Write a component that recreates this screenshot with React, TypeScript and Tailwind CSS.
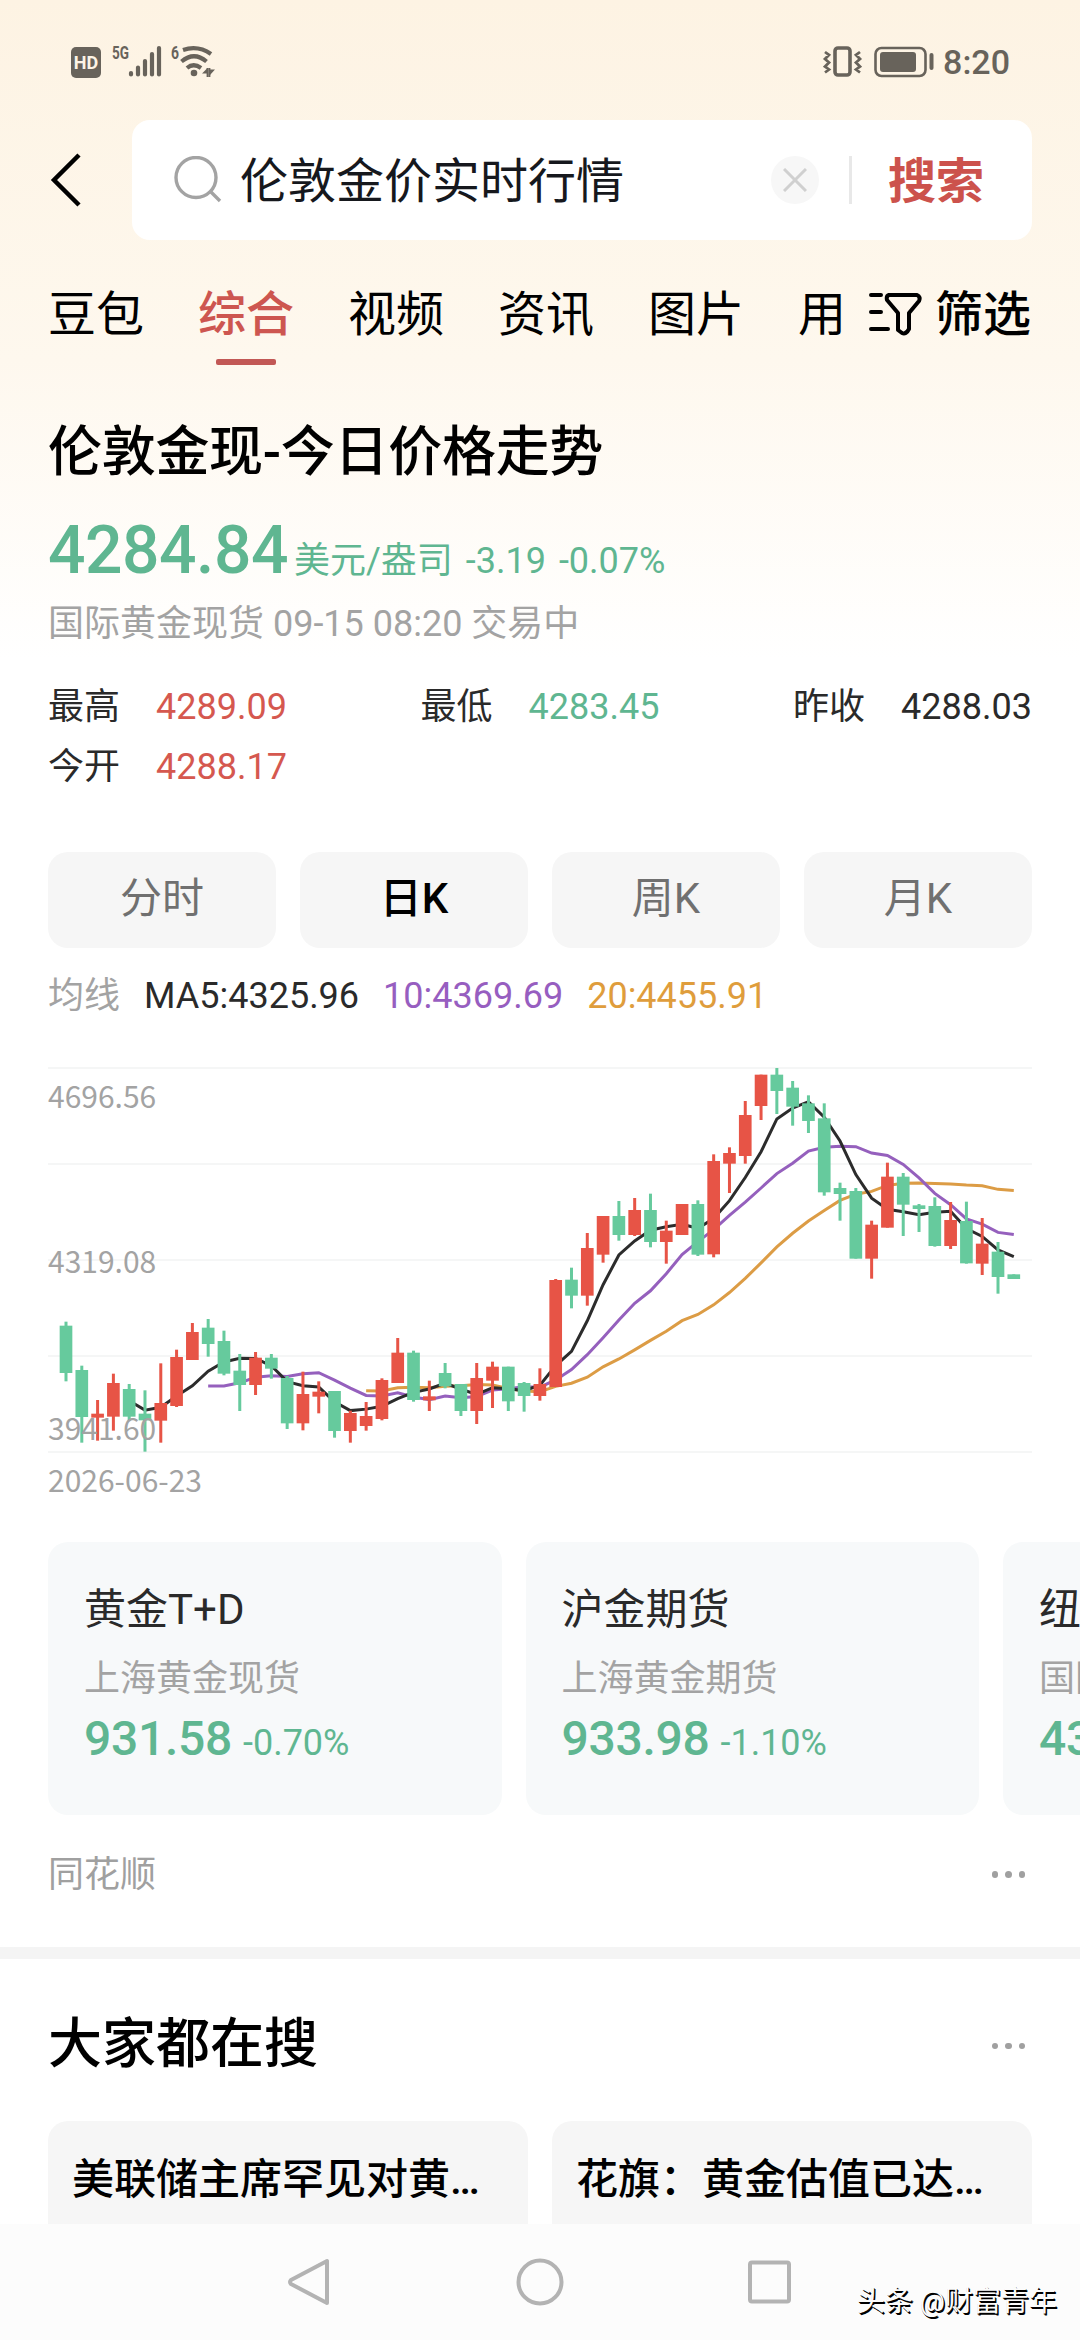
import type { ReactNode } from "react";

type Candle = [rise: 0 | 1, high: number, top: number, bottom: number, low: number];

// Daily candles in chart units (3 per px, y grows downwards).
const CANDLES: Candle[] = [
  [0, 845, 857, 999, 1024],
  [0, 977, 990, 1131, 1208],
  [1, 1080, 1121, 1133, 1202],
  [1, 1001, 1029, 1130, 1172],
  [0, 1032, 1047, 1130, 1142],
  [0, 1051, 1121, 1141, 1235],
  [1, 970, 1089, 1142, 1208],
  [1, 929, 951, 1098, 1101],
  [1, 849, 876, 960, 960],
  [0, 837, 863, 912, 950],
  [0, 872, 903, 1001, 1006],
  [0, 942, 992, 1035, 1113],
  [1, 936, 953, 1035, 1065],
  [0, 942, 953, 986, 1016],
  [0, 1008, 1014, 1150, 1167],
  [1, 995, 1062, 1150, 1171],
  [1, 1024, 1055, 1070, 1120],
  [0, 1053, 1053, 1173, 1193],
  [1, 1112, 1119, 1173, 1208],
  [1, 1086, 1128, 1158, 1172],
  [1, 1015, 1020, 1137, 1141],
  [1, 894, 938, 1029, 1029],
  [0, 932, 938, 1080, 1085],
  [1, 1022, 1069, 1081, 1113],
  [0, 969, 999, 1039, 1045],
  [0, 1032, 1032, 1113, 1128],
  [1, 969, 1014, 1113, 1152],
  [1, 965, 980, 1022, 1104],
  [0, 980, 980, 1084, 1113],
  [0, 1026, 1029, 1068, 1115],
  [1, 985, 1032, 1068, 1082],
  [1, 717, 720, 1041, 1041],
  [0, 683, 719, 767, 805],
  [1, 579, 624, 767, 797],
  [1, 528, 528, 644, 668],
  [0, 483, 528, 585, 602],
  [1, 474, 510, 585, 588],
  [0, 461, 510, 606, 622],
  [1, 542, 572, 606, 671],
  [1, 492, 492, 585, 585],
  [0, 481, 492, 644, 648],
  [1, 343, 363, 643, 652],
  [1, 322, 339, 371, 459],
  [1, 183, 225, 348, 371],
  [1, 104, 104, 198, 240],
  [0, 84, 104, 153, 222],
  [0, 123, 143, 200, 257],
  [0, 166, 190, 243, 279],
  [0, 190, 235, 457, 467],
  [0, 428, 444, 462, 542],
  [0, 444, 453, 656, 656],
  [1, 542, 554, 656, 716],
  [1, 368, 410, 563, 563],
  [0, 399, 410, 494, 588],
  [0, 492, 496, 507, 576],
  [0, 472, 498, 618, 620],
  [1, 486, 540, 618, 627],
  [0, 485, 543, 670, 671],
  [1, 534, 611, 671, 705],
  [0, 606, 635, 711, 761],
  [0, 703, 703, 717, 717],
];

const GRID = [84, 372, 660, 948, 1236];
const xAt = (i: number) => 54 + i * 47.39;

function movingAverage(days: number) {
  const closes = CANDLES.map(([rise, , top, bottom]) => (rise ? top : bottom));
  const points: string[] = [];
  for (let i = days - 1; i < closes.length; i++) {
    const sum = closes.slice(i - days + 1, i + 1).reduce((a, b) => a + b, 0);
    points.push(`${xAt(i).toFixed(1)},${(sum / days).toFixed(1)}`);
  }
  return points.join(" ");
}

const TABS = ["豆包", "综合", "视频", "资讯", "图片", "用"];
const PERIODS = ["分时", "日K", "周K", "月K"];
const MARKETS = [
  { name: "黄金T+D", source: "上海黄金现货", price: "931.58", change: "-0.70%" },
  { name: "沪金期货", source: "上海黄金期货", price: "933.98", change: "-1.10%" },
  { name: "纽", source: "国际", price: "43", change: "" },
];
const HOT = ["美联储主席罕见对黄…", "花旗：黄金估值已达…"];

export default function App() {
  return (
    <div className="flex h-[2340px] w-[1080px] flex-col overflow-hidden bg-white bg-[linear-gradient(to_bottom,#fdf3e3_0px,#fef8ee_360px,#ffffff_660px)] font-[Roboto,'Noto_Sans_CJK_SC',sans-serif] text-black">
      <StatusBar />
      <SearchBar />
      <TabBar />
      <main className="flex min-h-0 flex-1 flex-col overflow-hidden">
        <Quote />
        <Periods />
        <KLineChart />
        <Markets />
        <div className="flex h-[132px] shrink-0 items-start justify-between px-12 pt-[33px]">
          <span className="text-[36px] leading-[54px] text-[#a0a0a0]">同花顺</span>
          <More className="mt-[23px]" />
        </div>
        <div className="h-3 shrink-0 bg-[#f4f4f4]" />
        <section className="px-12 pt-[46px]">
          <div className="flex h-20 items-center justify-between">
            <h2 className="text-[54px] leading-20 font-medium">大家都在搜</h2>
            <More className="mt-[2px]" />
          </div>
          <div className="mt-9 grid grid-cols-2 gap-6">
            {HOT.map((text) => (
              <div
                key={text}
                className="h-[160px] rounded-[20px] bg-[#f6f6f6] px-6 pt-[29px] text-[42px] leading-[60px] font-medium whitespace-nowrap"
              >
                {text}
              </div>
            ))}
          </div>
        </section>
      </main>
      <NavBar />
    </div>
  );
}

function StatusBar() {
  return (
    <div className="flex h-[120px] shrink-0 items-start justify-between pr-[70px] pl-[71px] text-[#68635b]">
      <div className="mt-[44px] flex">
        <div className="mt-[3px] flex h-[31px] w-[30px] items-center justify-center rounded-[5px] bg-[#68635b] text-[18px] leading-6 font-bold text-[#fdf4e6]">
          HD
        </div>
        <svg className="ml-[10px] h-9 w-[106px] overflow-visible" viewBox="0 0 106 36" fill="none" stroke="currentColor">
          <text x="1" y="15" fontSize="18" fontWeight="700" fill="currentColor" stroke="none" textLength="17" lengthAdjust="spacingAndGlyphs">
            5G
          </text>
          <g strokeWidth="4.2" strokeLinecap="round">
            <path d="M20 29v1.5M27 23.500v7M34 17v13.500M41 10v20.500M48 4v26.500" />
          </g>
          <text x="60" y="15" fontSize="18" fontWeight="700" fill="currentColor" stroke="none" textLength="8" lengthAdjust="spacingAndGlyphs">
            6
          </text>
          <g strokeWidth="4.200">
            <path d="M72 6Q87 1 100 10M70.500 17.500Q83 7 95.500 17.500M76 24Q82.500 18.500 90 24" />
          </g>
          <circle cx="83" cy="29" r="3.300" fill="currentColor" stroke="none" />
          <path d="M96.500 24v9M98.500 24v9" strokeWidth="1.800" />
          <path d="M96 24.500v5h-5zM99 31v-5.500h5z" fill="currentColor" stroke="none" />
        </svg>
      </div>
      <div className="mt-[40px] flex items-center">
        <svg className="h-11 w-[116px]" viewBox="0 0 116 44" fill="none" stroke="currentColor">
          <rect x="14" y="8" width="15" height="27" rx="3" strokeWidth="3.600" />
          <path d="M4 12l4 3-4 4 4 3.500-4 4 4 3-4 3M39 12l-4 3 4 4-4 3.500 4 4-4 3 4 3" strokeWidth="2.800" />
          <rect x="54.500" y="8" width="50" height="28" rx="6" strokeWidth="2.600" />
          <rect x="59" y="12" width="36" height="20" rx="3" fill="currentColor" stroke="none" />
          <path d="M110.500 15v13" strokeWidth="4" strokeLinecap="round" />
        </svg>
        <span className="ml-[6px] text-[34px] leading-11 font-medium">8:20</span>
      </div>
    </div>
  );
}

function SearchBar() {
  return (
    <div className="flex h-[120px] shrink-0 items-center pr-12">
      <svg className="ml-[48px] h-[60px] w-[36px]" viewBox="0 0 36 60" fill="none" stroke="#000" strokeWidth="4.500">
        <path d="M31 5L6 30l25 25" />
      </svg>
      <div className="ml-12 flex h-[120px] flex-1 items-center rounded-[18px] bg-white">
        <svg className="ml-[42px] h-12 w-12" viewBox="0 0 48 48" fill="none" stroke="#a3a3a3" strokeWidth="3.400">
          <circle cx="22" cy="21.500" r="20" />
          <path d="M36 35l10 10" />
        </svg>
        <span className="ml-[18px] flex-1 pt-1 text-[48px] leading-[72px] text-[#16181d]">伦敦金价实时行情</span>
        <span className="flex h-12 w-12 items-center justify-center rounded-full bg-[#f7f7f7]">
          <svg className="h-6 w-6" viewBox="0 0 24 24" stroke="#d0d0d0" strokeWidth="3">
            <path d="M1 1l22 22M23 1L1 23" />
          </svg>
        </span>
        <span className="ml-[30px] h-12 w-[3px] bg-[#e8e8e8]" />
        <span className="mr-12 ml-[36px] pt-1 text-[48px] leading-[72px] font-bold text-[#cc524c]">搜索</span>
      </div>
    </div>
  );
}

function TabBar() {
  return (
    <div className="flex h-[150px] shrink-0 pt-[39px] pl-12 text-[48px] leading-[72px]">
      <div className="flex w-[797px] gap-[54px] whitespace-nowrap">
        {TABS.map((tab) =>
          tab === "综合" ? (
            <div key={tab} className="flex shrink-0 flex-col items-center font-medium text-[#cd5650]">
              {tab}
              <span className="mt-[8px] h-[6px] w-[60px] rounded-[2px] bg-[#c25855]" />
            </div>
          ) : (
            <div key={tab} className="shrink-0">
              {tab}
            </div>
          ),
        )}
      </div>
      <svg className="mt-[13px] ml-[22px] h-[44px] w-[56px] shrink-0" viewBox="0 0 56 44" fill="none" stroke="#000" strokeWidth="4" strokeLinecap="round" strokeLinejoin="round">
        <path d="M4 3h10M4 20h10M4 37h17" />
        <path d="M22 3h28q4 2 2 6L42 21v16q-3 6-7 4l-4-3V21L20 8q-1-4 2-5z" />
      </svg>
      <span className="ml-[12px] font-medium">筛选</span>
    </div>
  );
}

function Quote() {
  return (
    <section className="h-[462px] shrink-0 px-12 pt-[23px]">
      <h1 className="text-[54px] leading-20 font-medium tracking-[-0.3px]">伦敦金现-今日价格走势</h1>
      <div className="mt-4 flex h-[84px] items-baseline text-[#5fb691]">
        <span className="text-[66px] leading-[84px] font-medium tracking-[-0.5px]">4284.84</span>
        <span className="ml-[6px] text-[36px]">美元/盎司</span>
        <span className="ml-[13px] text-[36px]">-3.19</span>
        <span className="ml-[13px] text-[36px]">-0.07%</span>
      </div>
      <p className="mt-1 text-[36px] leading-[54px] text-[#a3a3a3]">国际黄金现货 09-15 08:20 交易中</p>
      <div className="mt-[26px] flex justify-between">
        <Stat label="最高" color="text-[#d5584f]">4289.09</Stat>
        <Stat label="最低" color="text-[#5fb691]">4283.45</Stat>
        <Stat label="昨收" color="text-[#2a2a2a]">4288.03</Stat>
      </div>
      <Stat label="今开" color="text-[#d5584f]">4288.17</Stat>
    </section>
  );
}

function Stat({ label, color, children }: { label: string; color: string; children: ReactNode }) {
  return (
    <div className="flex gap-9 text-[36px] leading-[60px]">
      <span className="text-[#2a2a2a]">{label}</span>
      <span className={color}>{children}</span>
    </div>
  );
}

function Periods() {
  return (
    <section className="shrink-0 px-12">
      <div className="grid grid-cols-4 gap-6">
        {PERIODS.map((p) => (
          <div
            key={p}
            className={`flex h-24 items-center justify-center rounded-[20px] bg-[#f6f6f6] pb-1 text-[42px] ${
              p === "日K" ? "font-medium text-black" : "text-[#707070]"
            }`}
          >
            {p}
          </div>
        ))}
      </div>
      <div className="flex h-[92px] items-center gap-6 pt-[3px] text-[36px]">
        <span className="text-[#a3a3a3]">均线</span>
        <span className="text-[#2a2a2a]">MA5:4325.96</span>
        <span className="text-[#975ec0]">10:4369.69</span>
        <span className="text-[#df9d3c]">20:4455.91</span>
      </div>
    </section>
  );
}

function KLineChart() {
  return (
    <section className="relative mx-12 h-[502px] shrink-0">
      <svg className="h-[420px] w-[984px]" viewBox="0 0 2952 1260" fill="none">
        {GRID.map((y) => (
          <path key={y} d={`M0 ${y}H2952`} stroke="#f5f6f6" strokeWidth="6" />
        ))}
        <polyline points={movingAverage(20)} stroke="#dc9c45" strokeWidth="9" />
        <polyline points={movingAverage(10)} stroke="#9560bd" strokeWidth="9" />
        <polyline points={movingAverage(5)} stroke="#2c2c2c" strokeWidth="9" />
        {CANDLES.map(([rise, high, top, bottom, low], i) => (
          <g key={i} fill={rise ? "#e75446" : "#66ca9d"}>
            <rect x={xAt(i) - 4.5} y={high} width="9" height={low - high} />
            <rect x={xAt(i) - 19} y={top} width="38" height={bottom - top} />
          </g>
        ))}
      </svg>
      {/* axis labels sit on top of the candles */}
      <div className="absolute inset-0 font-['Noto_Sans_CJK_SC',sans-serif] text-[30px] leading-10 text-[#a3a3a3]">
        <span className="absolute top-[35px] left-0">4696.56</span>
        <span className="absolute top-[200px] left-0">4319.08</span>
        <span className="absolute top-[367px] left-0">3941.60</span>
        <span className="absolute top-[419px] left-0">2026-06-23</span>
      </div>
    </section>
  );
}

function Markets() {
  return (
    <section className="flex shrink-0 gap-6 overflow-hidden pl-12">
      {MARKETS.map((m) => (
        <div key={m.name} className="h-[273px] w-[453.5px] shrink-0 rounded-[20px] bg-[#f7f9fa] px-9 pt-[36px]">
          <div className="text-[42px] leading-[64px] text-[#2a2a2a]">{m.name}</div>
          <div className="mt-[10px] text-[36px] leading-[54px] text-[#a3a3a3]">{m.source}</div>
          <div className="flex items-baseline gap-[11px] leading-[66px] text-[#5fb691]">
            <span className="text-[48px] font-medium tracking-[-0.3px]">{m.price}</span>
            <span className="text-[36px]">{m.change}</span>
          </div>
        </div>
      ))}
    </section>
  );
}

function More({ className }: { className: string }) {
  return (
    <div className={`flex gap-[7px] pr-[7px] ${className}`}>
      <span className="h-[6.5px] w-[6.5px] rounded-full bg-[#a0a0a0]" />
      <span className="h-[6.5px] w-[6.5px] rounded-full bg-[#a0a0a0]" />
      <span className="h-[6.5px] w-[6.5px] rounded-full bg-[#a0a0a0]" />
    </div>
  );
}

function NavBar() {
  return (
    <nav className="relative flex h-[116px] shrink-0 items-center justify-center gap-[182px] bg-[#fcfcfc]">
      <svg className="h-12 w-12" viewBox="0 0 48 48" fill="none" stroke="#b3b3b3" strokeWidth="4" strokeLinejoin="round">
        <path d="M41 3v42L5 26q-2-2 0-4z" />
      </svg>
      <svg className="h-12 w-12" viewBox="0 0 48 48" fill="none" stroke="#b3b3b3" strokeWidth="4">
        <circle cx="24" cy="24" r="21.500" />
      </svg>
      <svg className="h-12 w-12" viewBox="0 0 48 48" fill="none" stroke="#b3b3b3" strokeWidth="4">
        <rect x="4" y="4.500" width="39" height="39" rx="2" />
      </svg>
      <span className="absolute top-[58px] right-[23px] text-[28px] leading-10 text-[#fcfcfc] [text-shadow:1.5px_1.5px_0_#000,0.5px_0.5px_0_#000]">
        头条 @财富青年
      </span>
    </nav>
  );
}
